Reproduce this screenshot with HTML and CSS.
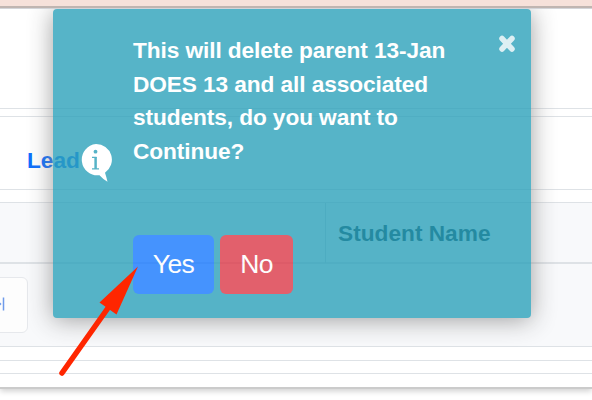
FILE: index.html
```html
<!DOCTYPE html>
<html lang="en">
<head>
    <meta charset="UTF-8">
    <meta name="viewport" content="width=device-width, initial-scale=1.0">
    <title>Students</title>
    <link rel="stylesheet" href="styles.css">
</head>
<body>
    <div class="banner"></div>
    <div class="panel">
        <div class="toolbar"></div>
        <div class="tabs"><a class="tab">Lead</a></div>
        <div class="table">
            <div class="table-head">
                <div class="cell"></div>
                <div class="cell">Student Name</div>
            </div>
            <div class="table-body">
                <button class="pager">
                    <svg width="14" height="16" viewBox="0 0 14 16">
                        <path d="M0 8h10M7.500 6l2 2-2 2M12.500 1.500v13" fill="none" stroke="#6f9bea" stroke-width="1.500"/>
                    </svg>
                </button>
            </div>
        </div>
        <div class="strip"></div>
        <div class="strip short"></div>
    </div>

    <div class="toast">
        <svg class="info-icon" width="34" height="40" viewBox="0 0 34 40">
            <path d="M18 1a15.700 15.700 0 1 0 3.500 31.200q3.500 4 8 6.500q-1-4.500-2.500-9A15.700 15.700 0 0 0 18 1z" fill="#fff"/>
            <circle cx="17.500" cy="8.700" r="1.900" fill="#2da1ba"/>
            <path d="M14 14.300h4.500M14 25.800h7" fill="none" stroke="#2da1ba" stroke-width="1.200"/>
            <path d="M17.600 14v12" stroke="#2da1ba" stroke-width="2.500"/>
        </svg>
        <div class="toast-content">
            <div class="message">This will delete parent 13-Jan<br>DOES 13 and all associated<br>students, do you want to<br>Continue?</div>
            <div class="actions">
                <button class="btn yes">Yes</button>
                <button class="btn no">No</button>
            </div>
        </div>
        <svg class="close" width="18" height="20" viewBox="0 0 18 20">
            <path d="M4 4.500l10 10.500M14 4.500L4 15" stroke="#fff" stroke-width="5.500" stroke-linecap="round"/>
        </svg>
    </div>

    <svg class="arrow" width="592" height="400" viewBox="0 0 592 400">
        <path d="M62 373L108 308" stroke="#ff2600" stroke-width="5.500" stroke-linecap="round"/>
        <path d="M138 266.500L99.500 302.500L116.500 314.500z" fill="#ff2600"/>
    </svg>
</body>
</html>
```
FILE: styles.css
```css
* {
    box-sizing: border-box;
}
body {
    margin: 0;
    height: 400px;
    overflow: hidden;
    background: #fff;
    font-family: "Liberation Sans", Arial, sans-serif;
    font-size: 22.7px;
    color: #212529;
}
.banner {
    position: relative;
    z-index: 2;
    height: 9px;
    background: #f6e1da;
    border-bottom: 1px solid #d3d4d8;
    box-shadow: inset 0 -2px 0 #c0b5b1;
}
.panel {
    height: 380px;
    border-bottom: 2px solid #cbcbcb;
    box-shadow: 0 2px 6px rgba(0, 0, 0, 0.2);
}
.toolbar {
    height: 100px;
    border-bottom: 1px solid #dee2e6;
}
.tabs {
    height: 74px;
    margin-top: 7px;
    padding: 29px 0 0 27px;
    border-top: 1px solid #dee2e6;
    border-bottom: 1px solid #dee2e6;
}
.tab {
    display: block;
    font-weight: bold;
    line-height: 28px;
    color: #0d6efd;
}
.table {
    height: 145px;
    margin-top: 12px;
    background: #f8f9fb;
    border-top: 1px solid #dee2e6;
    border-bottom: 1px solid #dee2e6;
}
.table-head {
    display: grid;
    grid-template-columns: 325px 1fr;
    height: 61px;
    border-bottom: 2px solid #dee2e6;
}
.cell {
    font-weight: bold;
    line-height: 60px;
    color: #002b3a;
}
.cell + .cell {
    padding-left: 12px;
    border-left: 1px solid #d0d6dc;
}
.table-body {
    padding-top: 13px;
}
.pager {
    display: flex;
    align-items: center;
    width: 48px;
    height: 56px;
    margin-left: -20px;
    padding: 0 0 3px 10px;
    background: #fdfdfd;
    border: 1px solid #e6e8ec;
    border-radius: 6px;
}
.strip {
    height: 14px;
    border-bottom: 1px solid #dee2e6;
}
.short {
    height: 13px;
}
.toast {
    position: absolute;
    left: 53px;
    top: 9px;
    display: flex;
    width: 478px;
    height: 309px;
    padding: 25px 15px 0 26px;
    background: #2da2bb;
    border-radius: 4px;
    box-shadow: 0 2px 24px #888;
    color: #fff;
    opacity: 0.8;
}
.info-icon {
    flex: none;
    margin: 109px 0 0 -1px;
}
.toast-content {
    flex: 1;
    margin-left: 21px;
}
.message {
    font-weight: bold;
    line-height: 33.6px;
    letter-spacing: -0.1px;
    white-space: nowrap;
}
.actions {
    display: flex;
    gap: 6px;
    margin-top: 67px;
}
.btn {
    height: 59px;
    padding: 0;
    border: none;
    border-radius: 6px;
    font-family: inherit;
    font-size: 26.5px;
    letter-spacing: -0.6px;
    color: #fff;
}
.yes {
    width: 81px;
    background: #197aff;
}
.no {
    width: 73px;
    background: #dd3a49;
}
.close {
    flex: none;
    opacity: 0.8;
}
.arrow {
    position: absolute;
    left: 0;
    top: 0;
}
```
